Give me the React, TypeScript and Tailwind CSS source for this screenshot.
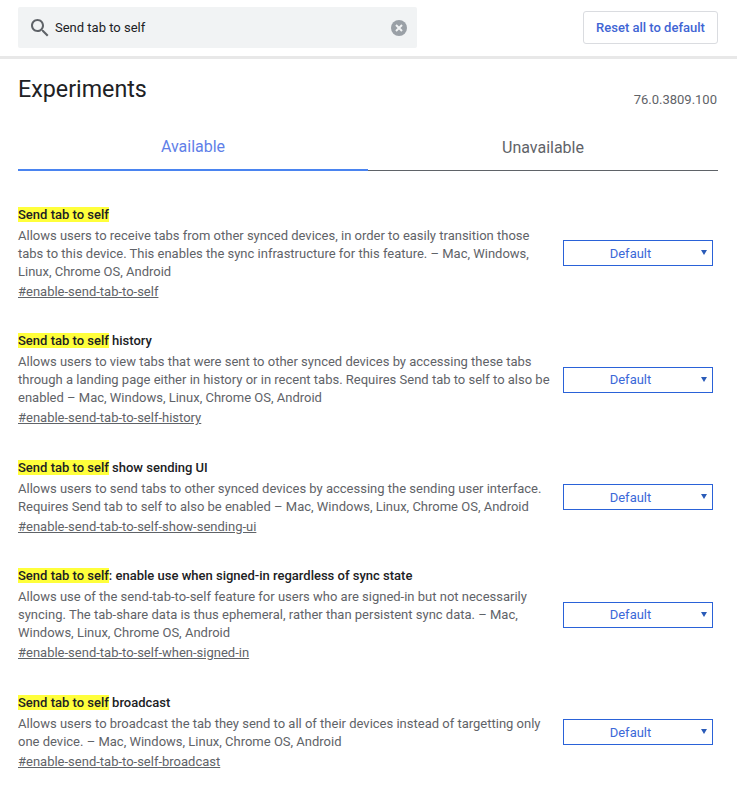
type Experiment = {
  rest: string;
  desc: string;
  hash: string;
};

const experiments: Experiment[] = [
  {
    rest: '',
    desc: 'Allows users to receive tabs from other synced devices, in order to easily transition those tabs to this device. This enables the sync infrastructure for this feature. – Mac, Windows, Linux, Chrome OS, Android',
    hash: '#enable-send-tab-to-self',
  },
  {
    rest: ' history',
    desc: 'Allows users to view tabs that were sent to other synced devices by accessing these tabs through a landing page either in history or in recent tabs. Requires Send tab to self to also be enabled – Mac, Windows, Linux, Chrome OS, Android',
    hash: '#enable-send-tab-to-self-history',
  },
  {
    rest: ' show sending UI',
    desc: 'Allows users to send tabs to other synced devices by accessing the sending user interface. Requires Send tab to self to also be enabled – Mac, Windows, Linux, Chrome OS, Android',
    hash: '#enable-send-tab-to-self-show-sending-ui',
  },
  {
    rest: ': enable use when signed-in regardless of sync state',
    desc: 'Allows use of the send-tab-to-self feature for users who are signed-in but not necessarily syncing. The tab-share data is thus ephemeral, rather than persistent sync data. – Mac, Windows, Linux, Chrome OS, Android',
    hash: '#enable-send-tab-to-self-when-signed-in',
  },
  {
    rest: ' broadcast',
    desc: 'Allows users to broadcast the tab they send to all of their devices instead of targetting only one device. – Mac, Windows, Linux, Chrome OS, Android',
    hash: '#enable-send-tab-to-self-broadcast',
  },
];

function ExperimentRow({ item }: { item: Experiment }) {
  return (
    <div className="flex items-center justify-between pr-[5px]">
      <div className="w-[534px] text-[13px] leading-[18px] text-[#5f6368]">
        <h2 className="font-medium text-[#202124]">
          <span className="bg-[#ffff3b]">Send tab to self</span>
          {item.rest}
        </h2>
        <p className="mt-[3px]">{item.desc}</p>
        <a className="mt-[2px] block underline">{item.hash}</a>
      </div>
      <div className="relative flex h-[26px] w-[150px] items-center justify-center border border-[#2a62d8] text-[13px] text-[#3b68d8]">
        <span className="pr-[15px]">Default</span>
        <span className="absolute right-[5px] top-[9px] h-0 w-0 border-x-[3px] border-t-[5px] border-x-transparent border-t-[#2a5bb8]" />
      </div>
    </div>
  );
}

export default function App() {
  return (
    <div className="min-h-[785px] bg-white font-['Roboto',sans-serif]">
      <header className="flex h-[59px] items-start justify-between border-b-[3px] border-[#e8e8e8] pl-[18px] pr-[19px] pt-[7px]">
        <div className="flex h-[41px] w-[399px] items-center rounded-[2px] bg-[#f1f3f4] pl-[10px] pr-[10px]">
          <svg viewBox="0 0 24 24" className="h-[24px] w-[24px] fill-[#5f6368]">
            <path d="M15.5 14h-.79l-.28-.27C15.41 12.59 16 11.11 16 9.5 16 5.91 13.09 3 9.5 3S3 5.91 3 9.5 5.91 16 9.5 16c1.61 0 3.09-.59 4.23-1.57l.27.28v.79l5 4.99L20.49 19l-4.99-5zm-6 0C7.01 14 5 11.99 5 9.5S7.01 5 9.5 5 14 7.01 14 9.5 11.99 14 9.5 14z" />
          </svg>
          <span className="ml-[3px] flex-1 text-[13px] text-[#202124]">Send tab to self</span>
          <svg viewBox="0 0 16 16" className="h-[16px] w-[16px]">
            <circle cx="8" cy="8" r="8" fill="#9aa0a6" />
            <path d="M5 5l6 6M11 5l-6 6" stroke="#f1f3f4" strokeWidth="2" />
          </svg>
        </div>
        <button className="mt-[4px] h-[33px] w-[135px] rounded-[3px] border border-[#dadce0] bg-white text-[13px] font-medium text-[#3f65d4]">
          Reset all to default
        </button>
      </header>

      <main className="pl-[18px] pr-[19px]">
        <div className="flex items-start justify-between pt-[16px]">
          <h1 className="text-[23.25px] leading-[28px] text-[#202124]">Experiments</h1>
          <span className="mr-[1px] mt-[17px] text-[13px] leading-[16px] text-[#5f6368]">76.0.3809.100</span>
        </div>

        <div className="mt-[19px] flex h-[44px] border-b border-[#5f6368] text-[16px]">
          <div className="-mb-px flex w-[350px] items-start justify-center border-b-2 border-[#4a84f0] pt-[8px] text-[#5f7fe8]">
            Available
          </div>
          <div className="flex flex-1 items-start justify-center pt-[9px] text-[#5f6368]">Unavailable</div>
        </div>

        <div className="mt-[34.75px] flex flex-col gap-[31.5px]">
          {experiments.map((item) => (
            <ExperimentRow key={item.hash} item={item} />
          ))}
        </div>
      </main>
    </div>
  );
}
